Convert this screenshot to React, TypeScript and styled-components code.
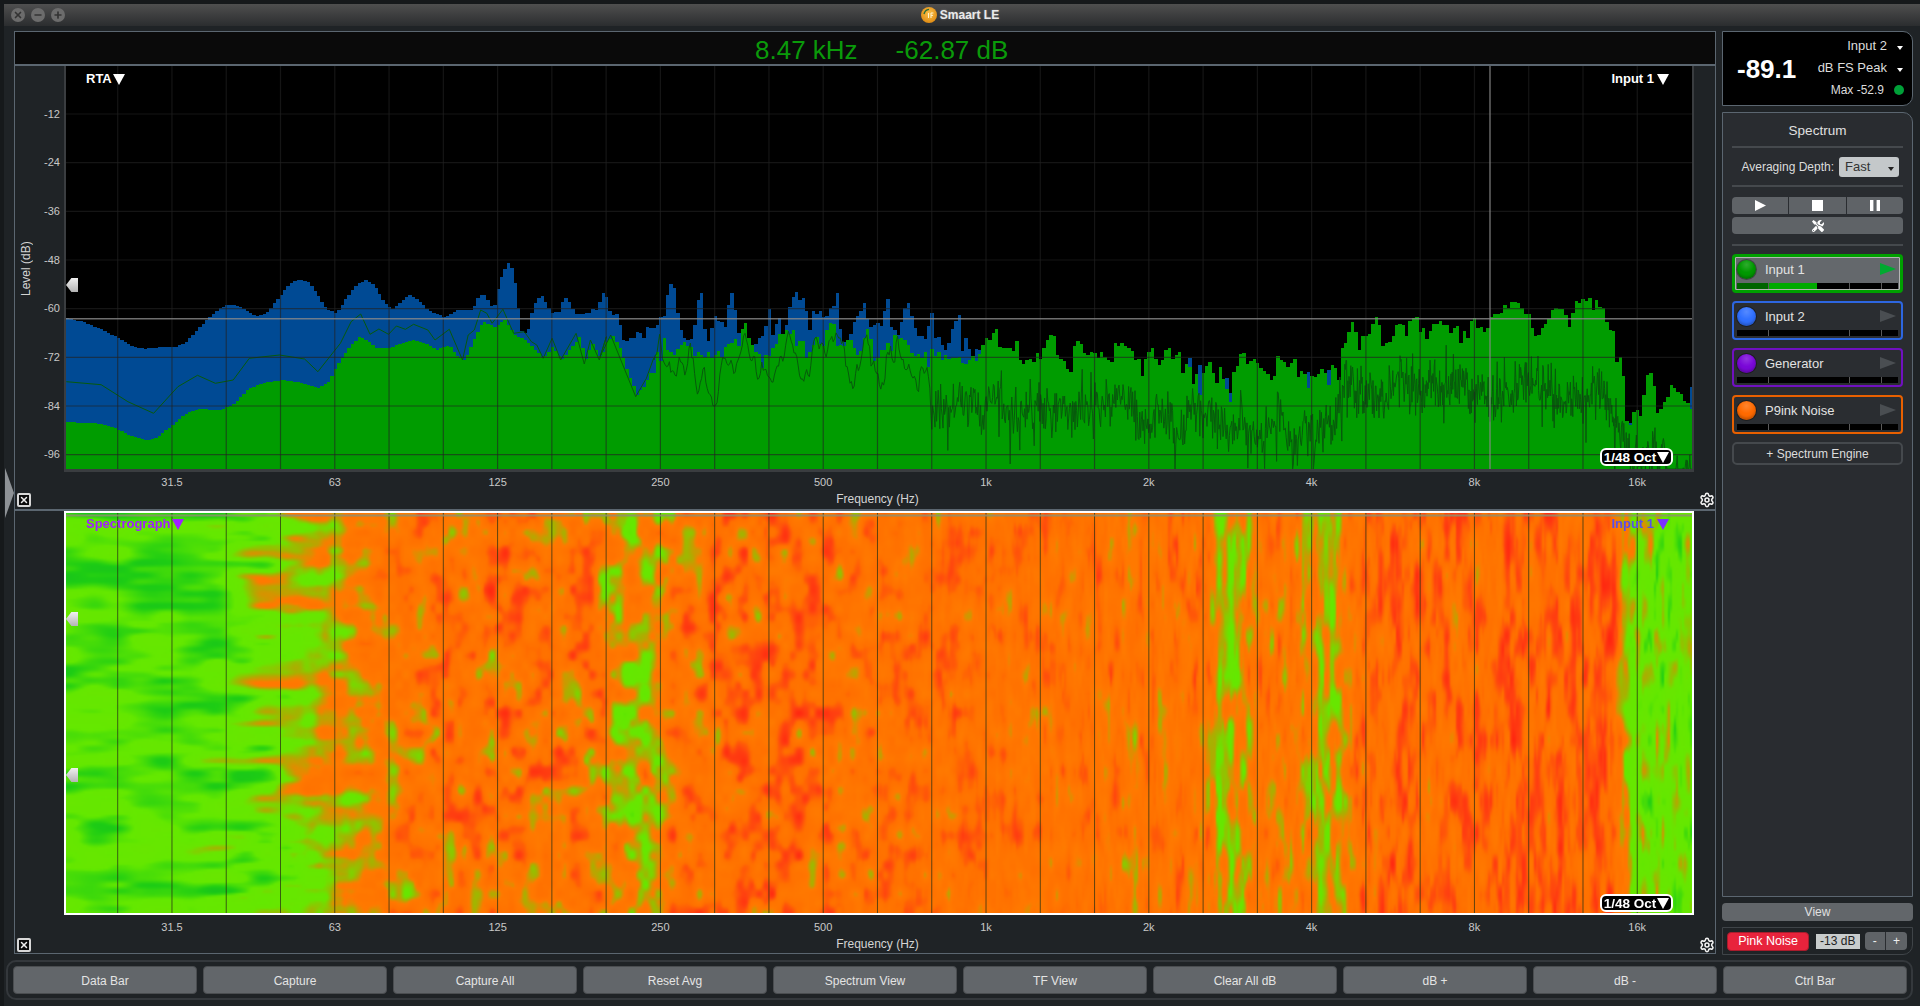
import React, { useLayoutEffect, useRef } from "react";
import styled, { createGlobalStyle } from "styled-components";
import { X, Minus, Plus, Settings } from "lucide-react";
import { FaTools } from "react-icons/fa";

const Global = createGlobalStyle`
  html, body { margin: 0; padding: 0; background: #16191b; overflow: hidden; }
  * { box-sizing: border-box; }
  body { font-family: "Liberation Sans", Arial, sans-serif; color: #d8d8d8; }
`;

/* ---------- data helpers ---------- */
type P = [number, number];
const rng = (seed: number) => () => {
  seed = (seed + 0x6d2b79f5) | 0;
  let t = Math.imul(seed ^ (seed >>> 15), 1 | seed);
  t = (t + Math.imul(t ^ (t >>> 7), 61 | t)) ^ t;
  return ((t ^ (t >>> 14)) >>> 0) / 4294967296;
};
const lerpAt = (pts: P[], x: number) => {
  if (x <= pts[0][0]) return pts[0][1];
  for (let i = 1; i < pts.length; i++) {
    if (x <= pts[i][0]) {
      const [a, b] = pts[i - 1];
      const [c, d] = pts[i];
      return b + ((d - b) * (x - a)) / (c - a || 1);
    }
  }
  return pts[pts.length - 1][1];
};
const from = (x0: number, arr: number[][]): P[] => arr.map(([X, Y]) => [x0 + X / 2.8, 250 + Y / 3]);

const hash = (x: number, y: number) => {
  let h = (Math.imul(x, 374761393) + Math.imul(y, 668265263)) | 0;
  h = Math.imul(h ^ (h >>> 13), 1274126177);
  return ((h ^ (h >>> 16)) >>> 0) / 4294967296;
};
const sm = (t: number) => t * t * (3 - 2 * t);
const vn = (x: number, y: number) => {
  const xi = Math.floor(x), yi = Math.floor(y);
  const u = sm(x - xi), v = sm(y - yi);
  const a = hash(xi, yi), b = hash(xi + 1, yi), c = hash(xi, yi + 1), d = hash(xi + 1, yi + 1);
  return (a + (b - a) * u + (c - a) * v + (a - b - c + d) * u * v) * 2 - 1;
};

const blue: P[] = [
  ...from(60, [[18,205],[60,215],[110,237],[160,265],[200,290],[230,296],[270,292],[320,291],[350,275],[380,240],[410,205],[440,177],[470,163],[500,170],[545,198],[575,188],[610,140],[640,100],[665,88],[690,95],[715,130],[740,175],[770,190],[800,140],[825,105],[850,90],[875,105],[900,150],[925,180],[950,155],[975,135],[1000,150],[1025,180],[1075,202],[1110,180],[1150,180],[1165,145],[1180,130],[1195,150],[1200,168],[1215,165],[1220,125],[1235,70],[1250,37],[1262,55],[1270,100],[1280,180],[1283,240],[1305,250],[1315,195],[1325,155],[1340,138],[1355,155],[1375,190],[1395,180],[1410,138],[1425,155],[1435,200],[1470,190],[1500,178],[1515,130],[1530,135]]),
  ...from(600, [[0,130],[15,135],[25,185],[45,195],[55,235],[65,295],[80,260],[100,248],[120,265],[125,238],[150,232],[160,220],[180,178],[190,97],[205,115],[215,210],[230,265],[250,270],[260,230],[270,155],[280,135],[285,220],[300,275],[315,195],[330,215],[345,230],[355,170],[365,135],[375,180],[385,250],[400,260],[430,295],[455,240],[470,185],[475,270],[490,225],[500,205],[510,270],[530,150],[545,135],[565,150],[575,180],[580,280],[590,190],[615,180],[625,215],[645,175],[660,135],[665,230],[685,290],[720,185],[735,160],[745,210],[755,240],[770,215],[785,230],[800,135],[810,225],[830,255],[855,145],[870,195],[885,255],[910,265],[925,185],[930,270],[945,270],[965,300],[985,225],[1000,180],[1010,310],[1020,268],[1030,300],[1040,320],[1050,295],[1120,280],[1190,165],[1200,340],[1290,320],[1568,360]]),
];
const green: P[] = [
  ...from(60, [[18,517],[90,518],[140,530],[190,555],[240,573],[270,560],[310,525],[350,490],[390,476],[440,482],[480,465],[520,420],[560,400],[620,390],[680,400],[720,415],[750,395],[775,340],[800,300],[835,258],[860,275],[880,295],[920,295],[945,282],[990,270],[1020,280],[1050,300],[1085,285],[1110,320],[1130,332],[1150,280],[1180,215],[1215,232],[1240,208],[1270,255],[1300,270],[1350,325],[1375,290],[1400,330],[1450,262],[1470,330],[1485,275],[1510,325],[1530,265]]),
  ...from(600, [[0,320],[30,252],[55,300],[75,370],[100,435],[130,385],[150,320],[175,265],[190,320],[245,275],[260,320],[340,310],[370,265],[385,285],[400,210],[425,295],[450,320],[480,300],[500,260],[520,240],[535,240],[545,285],[565,280],[570,330],[600,262],[620,290],[630,235],[650,220],[660,290],[695,265],[715,330],[750,235],[760,330],[790,290],[825,260],[850,260],[860,300],[900,320],[920,295],[950,320],[975,320],[1000,330],[1030,340],[1085,265],[1105,228],[1115,300],[1145,305],[1155,250],[1170,320],[1200,340],[1240,285],[1265,243],[1275,310],[1305,345],[1330,280],[1345,275],[1360,320],[1400,315],[1420,335],[1440,285],[1480,285],[1490,320],[1510,340]]),
  ...from(1140, [[0,395],[12,318],[30,305],[45,355],[75,278],[85,320],[100,305],[130,340],[160,375],[190,335],[200,370],[218,345],[240,420],[260,350],[288,298],[300,320],[325,340],[350,385],[390,295],[410,340],[430,325],[445,370],[470,380],[525,360],[535,345],[555,365],[560,300],[590,225],[610,270],[630,260],[660,200],[690,290],[715,215],[745,220],[780,190],[800,270],[820,225],[870,215],[890,245],[930,205],[960,250],[990,185],[1020,175],[1055,155],[1085,205],[1095,250],[1120,240],[1145,190],[1180,165],[1195,240],[1210,165],[1240,150],[1265,148],[1295,180],[1305,225],[1325,255],[1330,340],[1345,330],[1360,515],[1385,465],[1395,525],[1410,405],[1420,365],[1440,420],[1445,500],[1480,415],[1510,430],[1520,465],[1545,475],[1568,475]]),
];
const darkHead: P[] = [
  ...from(60, [[18,395],[115,404],[190,455],[262,490],[330,410],[385,376],[435,400],[485,390],[530,325],[615,315],[685,327],[722,365],[785,280],[815,215],[842,192],[868,253],[893,237],[920,253],[942,228],[967,238],[990,223],[1030,240],[1050,270],[1090,238],[1127,330],[1143,255],[1160,240],[1178,180],[1195,190],[1210,220],[1240,178],[1270,250],[1300,245],[1320,275],[1335,285],[1353,325],[1378,265],[1402,330],[1445,250],[1468,342],[1485,270],[1510,330],[1530,260]]),
  ...from(600, [[0,320],[30,255],[100,440],[130,385],[150,325]]),
];
const darkMid: P[] = from(600, [[150,325],[165,280],[205,370],[220,320],[238,380],[250,290],[272,430],[290,375],[310,420],[328,430],[345,320],[385,350],[405,250],[440,390],[460,340],[490,380],[525,260],[575,390],[600,310],[630,340],[650,250],[690,350],[720,380],[755,270],[770,410],[830,280],[860,400],[885,370],[915,350],[925,430]]);
const centre: P[] = [[930,396],[1000,406],[1100,407],[1160,416],[1230,422],[1336,424],[1345,392],[1500,388],[1600,394],[1625,445],[1700,470]];
const spikes: number[][] = [
  [1188,358,367],[1198,365,395],[1225,378,389],[1228,393,402],[1307,372,388],[1327,370,385],[1628,423,425],[1690,387,409],
];

const STEP = 3.39;
const buildSpectrum = () => {
  const r = rng(11);
  let b = "M66 469 ";
  let g = "M66 469 ";
  for (let x = 66; x < 1692; x += STEP) {
    let gy = lerpAt(green, x);
    let by = x < 985 ? lerpAt(blue, x) : 500;
    if (x > 640) {
      gy += (r() - 0.5) * 8;
      if (r() < 0.09) gy += 8 + r() * 10;
    }
    if (x > 520 && x < 985) by += (r() - 0.5) * 6;
    const sp = spikes.find((s) => Math.abs(s[0] - x) < 2);
    if (sp) { by = sp[1]; gy = sp[2]; }
    b += `L${x.toFixed(1)} ${by.toFixed(1)} L${(x + STEP).toFixed(1)} ${by.toFixed(1)} `;
    g += `L${x.toFixed(1)} ${gy.toFixed(1)} L${(x + STEP).toFixed(1)} ${gy.toFixed(1)} `;
  }
  b += "L1692 469 Z";
  g += "L1692 469 Z";
  let d = `M${darkHead[0][0]} ${darkHead[0][1]} `;
  darkHead.forEach((p) => { d += `L${p[0].toFixed(1)} ${p[1].toFixed(1)} `; });
  for (let x = 654; x < 931; x += 1.4) {
    const amp = 10 + ((x - 654) / 277) * 10;
    d += `L${x.toFixed(1)} ${(lerpAt(darkMid, x) + vn(x / 3.4, 3) * amp + vn(x / 1.3, 8) * 5).toFixed(1)} `;
  }
  for (let x = 931; x < 1692; ) {
    const c = lerpAt(centre, x);
    const n = (r() + r()) / 2 - 0.5;
    const drop = r() < 0.08 ? 12 + r() * 24 : 0;
    const lift = r() < 0.06 ? -(8 + r() * 16) : 0;
    d += `L${x.toFixed(1)} ${Math.min(469, c + n * 56 + vn(x / 10, 7) * 15 + vn(x / 45, 2) * 5 + drop + lift).toFixed(1)} `;
    x += x > 1340 ? 0.6 : 0.8;
  }
  return { b, g, d };
};
const spectrum = buildSpectrum();

const gridX = Array.from({ length: 29 }, (_, k) => 117.7 + 54.27 * k).filter((x) => x < 1692);
const gridY = [114, 162.6, 211.3, 260, 308.7, 357.3, 406, 454.6];
const freqs = ["31.5", "63", "125", "250", "500", "1k", "2k", "4k", "8k", "16k"];
const levels = ["-12", "-24", "-36", "-48", "-60", "-72", "-84", "-96"];

/* ---------- spectrograph ---------- */
const fbm = (x: number, y: number) => (vn(x, y) * 0.72 + vn(2.1 * x + 5.3, 2.1 * y + 9.1) * 0.34) * 1.35;
const clamp01 = (t: number) => Math.max(0, Math.min(1, t));
const profile: P[] = [[66,.39],[190,.4],[243,.47],[290,.55],[337,.63],[390,.71],[480,.78],[540,.77],[600,.72],[625,.62],[655,.63],[675,.75],[720,.79],[790,.8],[860,.76],[930,.78],[1000,.76],[1080,.77],[1150,.75],[1205,.74],[1218,.6],[1236,.6],[1255,.74],[1300,.72],[1316,.63],[1335,.63],[1352,.75],[1365,.81],[1500,.82],[1580,.84],[1612,.88],[1622,.62],[1640,.5],[1692,.47]];
const ramp: [number, number[]][] = [
  [.12,[12,178,44]],[.3,[30,205,20]],[.42,[100,232,0]],[.52,[104,230,0]],[.6,[170,175,0]],[.67,[255,122,0]],[.81,[255,112,0]],[.93,[255,66,16]],[1.05,[255,34,16]],
];
const colorOf = (v: number) => {
  if (v <= ramp[0][0]) return ramp[0][1];
  for (let i = 1; i < ramp.length; i++) {
    if (v <= ramp[i][0]) {
      const t = (v - ramp[i - 1][0]) / (ramp[i][0] - ramp[i - 1][0]);
      return ramp[i][1].map((c, k) => ramp[i - 1][1][k] + (c - ramp[i - 1][1][k]) * t);
    }
  }
  return ramp[ramp.length - 1][1];
};
const paint = (c: HTMLCanvasElement) => {
  const ctx = c.getContext("2d");
  if (!ctx) return;
  const W = c.width, H = c.height;
  const img = ctx.createImageData(W, H);
  const sx = 1626 / W, sy = 400 / H;
  for (let j = 0; j < H; j++) {
    for (let i = 0; i < W; i++) {
      const x = 66 + i * sx, y = j * sy;
      const low = clamp01((430 - x) / 170);
      const high = clamp01((x - 780) / 420);
      const mid = 1 - low - high;
      const lowAmp = 0.11 + 0.09 * clamp01((x - 190) / 60);
      let n = 0;
      if (low > 0) n += low * fbm(x / 52, y / 13) * lowAmp;
      if (mid > 0) n += mid * fbm(x / 14 + 40, y / 20) * 0.185;
      if (high > 0) n += high * (fbm(x / 6 + 80, y / 32) * 0.15 + vn(x / 9, 3.3) * 0.03);
      const [r, g, b] = colorOf(lerpAt(profile, x) + n);
      const k = (j * W + i) * 4;
      img.data[k] = r; img.data[k + 1] = g; img.data[k + 2] = b; img.data[k + 3] = 255;
    }
  }
  ctx.putImageData(img, 0, 0);
};

/* ---------- window chrome ---------- */
const Win = styled.div`
  width: 1920px; height: 1006px; padding: 4px 0 0 4px; display: flex; flex-direction: column; overflow: hidden;
`;
const Inner = styled.div`
  flex: 1; display: flex; flex-direction: column; background: #1f2326; min-height: 0;
`;
const TitleBar = styled.div`
  height: 22px; flex: none; position: relative; display: flex; align-items: center; justify-content: center;
  padding-right: 4px; gap: 3px;
  background: linear-gradient(#4f4f4f, #2b2d2f);
  font-size: 12px; font-weight: 700; color: #eaeaea;
  text-shadow: 0 0 2px rgba(255,255,255,.35);
`;
const Lights = styled.div`
  position: absolute; left: 7px; top: 4px; display: flex; gap: 6px;
`;
const Light = styled.span`
  width: 14px; height: 14px; border-radius: 50%; background: #6c6c6c; color: #333;
  display: flex; align-items: center; justify-content: center;
`;
const Main = styled.div`
  flex: none; display: flex; gap: 6px; padding: 5px 0 0 10px; height: 928px;
`;
const LeftPane = styled.div`
  width: 1702px; display: flex; flex-direction: column;
`;
const RightPane = styled.div`
  width: 191px; display: flex; flex-direction: column;
`;
const Readout = styled.div`
  height: 35px; flex: none; background: #0a0a0a; border: 1px solid #5b6670; border-bottom-width: 2px;
  display: flex; align-items: center; padding: 4px 0 0 740px; gap: 38px;
  font-size: 26px; color: #0a9a0a; line-height: 1;
`;
const PlotSection = styled.section<{ $last?: boolean }>`
  position: relative; height: 443px; flex: none;
  display: grid; grid-template-columns: 49px 1630px 1fr;
  border-left: 1px solid #5b6670; border-right: 1px solid #5b6670;
  border-bottom: ${(p) => (p.$last ? "1px solid #5b6670" : "none")};
`;
const Divider = styled.div`
  height: 2px; flex: none; background: #5b6670;
`;
const YAxis = styled.div`
  display: flex; justify-content: space-between; padding: 0 4px 0 5px;
`;
const LevelTitle = styled.div`
  writing-mode: vertical-rl; transform: rotate(180deg); font-size: 12px; color: #d4d4d4;
  margin-top: 173px; height: 60px; line-height: 12px; text-align: center;
`;
const YTicks = styled.div`
  display: flex; flex-direction: column; padding-top: 23.2px;
`;
const YTick = styled.div`
  height: 48.7px; flex: none; display: flex; align-items: center; justify-content: flex-end;
  font-size: 11px; color: #c8c8c8;
`;
const PlotCol = styled.div`
  display: flex; flex-direction: column;
`;
const ChartBox = styled.div<{ $height: number; $frame: string; $top: number }>`
  position: relative; height: ${(p) => p.$height}px; flex: none; background: #000;
  border-left: 2px solid ${(p) => p.$frame}; border-right: 2px solid ${(p) => p.$frame};
  border-bottom: ${(p) => (p.$top ? 2 : 3)}px solid ${(p) => p.$frame};
  border-top: ${(p) => p.$top}px solid ${(p) => p.$frame};
`;
const ChartSvg = styled.svg`
  position: absolute; inset: 0; width: 100%; height: 100%; display: block;
`;
const Heat = styled.canvas`
  display: block; width: 100%; height: 100%; image-rendering: auto;
`;
const XTicks = styled.div<{ $gap: number }>`
  display: flex; padding-left: 26.6px; height: 18px; flex: none; margin-top: ${(p) => p.$gap}px;
`;
const XTick = styled.div`
  width: 162.8px; flex: none; text-align: center; font-size: 11px; line-height: 18px; color: #c8c8c8;
`;
const XTitle = styled.div`
  height: 16px; padding-right: 3px; text-align: center; font-size: 12px; line-height: 16px; color: #d4d4d4;
`;
const PlotLabel = styled.div<{ $color: string; $right?: boolean; $top: number }>`
  position: absolute; top: ${(p) => p.$top}px;
  ${(p) => (p.$right ? "right: 23px; gap: 3px;" : "left: 20px; gap: 1px;")}
  display: flex; align-items: center;
  font-size: 13px; font-weight: 700; color: ${(p) => p.$color}; line-height: 16px;
`;
const Tri = styled.span<{ $color: string }>`
  display: inline-block; width: 0; height: 0;
  border-left: 6px solid transparent; border-right: 6px solid transparent;
  border-top: 11px solid ${(p) => p.$color};
`;
const OctBadge = styled.div<{ $bottom: number }>`
  position: absolute; right: 19px; bottom: ${(p) => p.$bottom}px; height: 18px; width: 73px;
  background: #000; border: 2px solid #fff; border-radius: 6px;
  display: flex; align-items: center; justify-content: center; gap: 1px;
  font-size: 13.5px; font-weight: 700; color: #fff; white-space: nowrap;
`;
const Handle = styled.div<{ $top: number }>`
  position: absolute; left: 0; top: ${(p) => p.$top}px; width: 12px; height: 14px;
  background: linear-gradient(#f0f0f0, #b4b4b4);
  clip-path: polygon(45% 0, 100% 0, 100% 100%, 45% 100%, 0 50%);
`;
const CloseBox = styled.button<{ $bottom: number }>`
  position: absolute; left: 2px; bottom: ${(p) => p.$bottom}px; width: 14px; height: 14px; padding: 0;
  background: #0c0c0c; border: 2px solid #d8d8d8; border-radius: 2px; color: #eee;
  display: flex; align-items: center; justify-content: center;
`;
const Gear = styled.div<{ $bottom: number }>`
  position: absolute; right: 0; bottom: ${(p) => p.$bottom}px; width: 16px; height: 16px; color: #f4f4f4;
  display: flex;
`;
const SideArrow = styled.svg`
  position: absolute; left: -10px; top: 402px;
`;

/* ---------- right pane ---------- */
const Meter = styled.div`
  height: 75px; flex: none; background: #000; border: 1px solid #5b6670;
  border-radius: 0 10px 10px 0; display: flex; align-items: center; padding: 0 9px 0 14px; justify-content: space-between;
`;
const BigValue = styled.div`
  font-size: 26px; font-weight: 700; color: #fff; margin-top: 2px;
`;
const MeterLines = styled.div`
  display: flex; flex-direction: column; align-items: flex-end; gap: 4px; margin-top: -2px;
`;
const MeterLine = styled.div<{ $small?: boolean }>`
  height: 18px; display: flex; align-items: center; gap: 10px; font-size: ${(p) => (p.$small ? 12 : 13)}px; color: #dcdcdc;
`;
const Caret = styled.span<{ $color?: string }>`
  display: inline-block; width: 0; height: 0; margin-top: 4px;
  border-left: 3.5px solid transparent; border-right: 3.5px solid transparent;
  border-top: 4px solid ${(p) => p.$color || "#fff"};
`;
const LevelDot = styled.span`
  width: 10px; height: 10px; border-radius: 50%; background: #00a038; margin-right: -1px;
`;
const SpectrumPanel = styled.div`
  height: 785px; flex: none; margin-top: 6px; background: #292c30; border: 1px solid #5b6670;
  border-top-right-radius: 10px; padding: 0 9px; display: flex; flex-direction: column;
`;
const PanelTitle = styled.div`
  height: 33px; flex: none; display: flex; align-items: center; justify-content: center; padding-top: 2px; font-size: 13.5px; color: #e0e0e0;
`;
const Sep = styled.div`
  height: 2px; flex: none; background: #45494d;
`;
const AvgRow = styled.div`
  height: 37px; flex: none; display: flex; align-items: center; justify-content: flex-end; gap: 5px; padding-right: 4px;
  font-size: 12px; color: #dcdcdc;
`;
const Dropdown = styled.div`
  width: 60px; height: 20px; background: #c4c8ca; border-radius: 3px; color: #333; font-size: 13px;
  display: flex; align-items: center; justify-content: space-between; padding: 0 5px 0 6px;
`;
const Transport = styled.div`
  display: grid; grid-template-columns: repeat(3, 1fr); gap: 1px; height: 17px; flex: none; margin-top: 10px;
  background: #2a2d31; border-radius: 4px; overflow: hidden;
`;
const TransportBtn = styled.div`
  background: #5f6367; display: flex; align-items: center; justify-content: center; color: #fff;
`;
const ToolsBar = styled.div`
  height: 17px; flex: none; margin: 3px 0 10px; background: #5f6367; border-radius: 4px; color: #fff;
  display: flex; align-items: center; justify-content: center;
`;
const Channels = styled.div`
  display: flex; flex-direction: column; gap: 8px; margin-top: 8px;
`;
const Channel = styled.div<{ $color: string; $selected?: boolean }>`
  height: 39px; border-radius: 4px; display: flex; flex-direction: column; justify-content: space-between;
  border: ${(p) => (p.$selected ? 3 : 2)}px solid ${(p) => p.$color};
  padding: ${(p) => (p.$selected ? "2px 2px 1px" : "3px 3px 2px")};
  background: ${(p) => (p.$selected ? "#64686c" : "#2a2d31")};
  box-shadow: ${(p) => (p.$selected ? "inset 0 0 0 1px #b4b4b4" : "none")};
`;
const ChannelTop = styled.div`
  display: flex; align-items: center; height: 20px; font-size: 13px; color: #e2e2e2;
`;
const ChannelDot = styled.span<{ $color: string }>`
  width: 19px; height: 19px; border-radius: 50%; flex: none; margin-right: 9px;
  background: radial-gradient(circle at 50% 25%, rgba(255,255,255,.18), transparent 45%), ${(p) => p.$color};
  box-shadow: inset 0 -2px 3px rgba(0,0,0,.25), 0 0 0 1px rgba(0,0,0,.35);
`;
const ChannelName = styled.span`
  flex: 1;
`;
const PlayTri = styled.span<{ $color: string }>`
  width: 0; height: 0; margin-right: 2px;
  border-top: 6px solid transparent; border-bottom: 6px solid transparent;
  border-left: 16px solid ${(p) => p.$color};
`;
const MeterBar = styled.div`
  height: 6px; flex: none; background: #000; display: grid; grid-template-columns: 32px 81px 32px 1fr;
`;
const MeterSeg = styled.div<{ $fill?: string; $pct?: number }>`
  border-right: 1px solid #5a5a5a;
  &:last-child { border-right: none; }
  background: ${(p) => (p.$fill ? `linear-gradient(to right, ${p.$fill} ${p.$pct}%, transparent ${p.$pct}%)` : "none")};
`;
const AddEngine = styled.div`
  height: 23px; flex: none; margin-top: 8px; background: #2a2d31; border: 2px solid #45494d; border-radius: 5px;
  display: flex; align-items: center; justify-content: center; font-size: 12px; color: #dcdcdc;
`;
const ViewBtn = styled.div`
  height: 18px; flex: none; margin-top: 6px; background: #62666a; border-radius: 4px;
  display: flex; align-items: center; justify-content: center; font-size: 12px; color: #e0e0e0;
`;
const NoisePanel = styled.div`
  height: 28px; flex: none; margin-top: 6px; border: 1px solid #3f4448; border-radius: 0 0 10px 0;
  display: flex; align-items: center; padding: 0 5px 0 4px;
`;
const PinkBtn = styled.div`
  width: 83px; height: 19px; background: #e8233c; border: 1px solid #a81c2c; border-radius: 4px;
  display: flex; align-items: center; justify-content: center; font-size: 12.5px; color: #fff;
`;
const DbBox = styled.div`
  width: 44px; height: 15px; margin-left: 7px; background: #c8cccc; color: #222; font-size: 12px;
  display: flex; align-items: center; justify-content: center;
`;
const StepGroup = styled.div`
  width: 43px; height: 18px; margin-left: 5px; display: grid; grid-template-columns: 1fr 1fr; gap: 1px;
  background: #2a2d31; border-radius: 4px; overflow: hidden;
`;
const StepBtn = styled.div`
  background: #5f6367; color: #eee; font-size: 12px; display: flex; align-items: center; justify-content: center;
`;

/* ---------- bottom bar ---------- */
const BottomBar = styled.div`
  height: 40px; width: 1907px; flex: none; margin: 6px 0 0 2px; border: 2px solid #34383c; border-radius: 10px;
  padding: 4px 5px; display: grid; grid-template-columns: repeat(10, 184px); gap: 6px;
`;
const BarBtn = styled.button`
  background: #62666a; border: 1px solid #4a4d50; border-radius: 4px; color: #e4e4e4; padding: 1px 0 0;
  font-family: inherit; font-size: 12px;
`;

/* ---------- parts ---------- */
const Logo = () => (
  <svg width="16" height="16" viewBox="0 0 16 16">
    <defs>
      <radialGradient id="lg" cx="50%" cy="40%" r="60%">
        <stop offset="0" stopColor="#f9c04a" />
        <stop offset="1" stopColor="#e08c14" />
      </radialGradient>
    </defs>
    <circle cx="8" cy="8" r="8" fill="url(#lg)" />
    <path d="M3 7 A6 6 0 0 1 8 2.4" fill="none" stroke="#2f6d3a" strokeWidth="1.4" />
    <path d="M7.5 6v5M10 6v5M10 6h2.4M10 8.4h2" stroke="#fff3d0" strokeWidth="1" fill="none" />
  </svg>
);

const SpectrumChart = () => (
  <ChartSvg viewBox="66 66 1626 403" preserveAspectRatio="none">
    <path d={spectrum.b} fill="#004a94" shapeRendering="crispEdges" />
    <path d={spectrum.g} fill="#009c00" shapeRendering="crispEdges" />
    <path d={spectrum.d} fill="none" stroke="#075a0c" strokeWidth="1" />
    {gridX.map((x) => (
      <line key={x} x1={x} x2={x} y1="66" y2="469" stroke="rgb(34,34,34)" strokeOpacity=".62" strokeWidth="1.2" />
    ))}
    {gridY.map((y) => (
      <line key={y} x1="66" x2="1692" y1={y} y2={y} stroke="rgb(34,34,34)" strokeOpacity=".62" strokeWidth="1.2" />
    ))}
    <line x1="1490" x2="1490" y1="66" y2="469" stroke="#8a8a8a" strokeOpacity=".8" strokeWidth="1.4" />
    <line x1="66" x2="1692" y1="318.7" y2="318.7" stroke="#8a8a8a" strokeOpacity=".8" strokeWidth="1.6" />
  </ChartSvg>
);

const Spectrograph = () => {
  const ref = useRef<HTMLCanvasElement>(null);
  useLayoutEffect(() => {
    if (ref.current) paint(ref.current);
  }, []);
  return (
    <>
      <Heat ref={ref} width={813} height={200} />
      <ChartSvg viewBox="66 513 1626 400" preserveAspectRatio="none">
        {gridX.map((x) => (
          <line key={x} x1={x} x2={x} y1="513" y2="913" stroke="rgb(40,50,20)" strokeOpacity=".75" strokeWidth="1" />
        ))}
        <line x1="66" x2="1692" y1="515.5" y2="515.5" stroke="#8f8f70" strokeOpacity=".85" strokeWidth="2" />
      </ChartSvg>
    </>
  );
};

const Axis = ({ gap }: { gap: number }) => (
  <>
    <XTicks $gap={gap}>
      {freqs.map((f) => <XTick key={f}>{f}</XTick>)}
    </XTicks>
    <XTitle>Frequency (Hz)</XTitle>
  </>
);

const channelData = [
  { name: "Input 1", border: "#00a000", dot: "#009900", selected: true, play: "#00aa30" },
  { name: "Input 2", border: "#2d66e0", dot: "#3070ff", play: "#4a4e52" },
  { name: "Generator", border: "#7010c0", dot: "#7a08d8", play: "#4a4e52" },
  { name: "P9ink Noise", border: "#e86000", dot: "#ff6a00", play: "#4a4e52" },
];
const buttons = ["Data Bar", "Capture", "Capture All", "Reset Avg", "Spectrum View", "TF View", "Clear All dB", "dB +", "dB -", "Ctrl Bar"];

export default function App() {
  return (
    <Win>
      <Global />
      <Inner>
        <TitleBar>
          <Lights>
            <Light><X size={10} strokeWidth={4} /></Light>
            <Light><Minus size={10} strokeWidth={4} /></Light>
            <Light><Plus size={10} strokeWidth={4} /></Light>
          </Lights>
          <Logo />
          <span>Smaart LE</span>
        </TitleBar>
        <Main>
          <LeftPane>
            <Readout>
              <span>8.47 kHz</span>
              <span>-62.87 dB</span>
            </Readout>
            <PlotSection>
              <YAxis>
                <LevelTitle>Level (dB)</LevelTitle>
                <YTicks>
                  {levels.map((l) => <YTick key={l}>{l}</YTick>)}
                </YTicks>
              </YAxis>
              <PlotCol>
                <ChartBox $height={406} $frame="#3a3d40" $top={0}>
                  <SpectrumChart />
                  <Handle $top={212} />
                  <PlotLabel $color="#fff" $top={5}>RTA<Tri $color="#fff" /></PlotLabel>
                  <PlotLabel $color="#fff" $top={5} $right>Input 1<Tri $color="#fff" /></PlotLabel>
                  <OctBadge $bottom={3}>1/48 Oct<Tri $color="#fff" /></OctBadge>
                </ChartBox>
                <Axis gap={1} />
              </PlotCol>
              <CloseBox $bottom={2}><X size={10} strokeWidth={3.5} /></CloseBox>
              <Gear $bottom={1}><Settings size={16} strokeWidth={2.3} /></Gear>
              <SideArrow width="9" height="50" viewBox="0 0 9 50">
                <path d="M0 0 L9 25 L0 50 Z" fill="#8e9296" />
              </SideArrow>
            </PlotSection>
            <Divider />
            <PlotSection $last>
              <YAxis />
              <PlotCol>
                <ChartBox $height={404} $frame="#fff" $top={2}>
                  <Spectrograph />
                  <Handle $top={99} />
                  <Handle $top={255} />
                  <PlotLabel $color="#a020ff" $top={3}>Spectrograph<Tri $color="#a020ff" /></PlotLabel>
                  <PlotLabel $color="#5a50e8" $top={3} $right>Input 1<Tri $color="#7a30ff" /></PlotLabel>
                  <OctBadge $bottom={1}>1/48 Oct<Tri $color="#fff" /></OctBadge>
                </ChartBox>
                <Axis gap={3} />
              </PlotCol>
              <CloseBox $bottom={1}><X size={10} strokeWidth={3.5} /></CloseBox>
              <Gear $bottom={0}><Settings size={16} strokeWidth={2.3} /></Gear>
            </PlotSection>
          </LeftPane>
          <RightPane>
            <Meter>
              <BigValue>-89.1</BigValue>
              <MeterLines>
                <MeterLine>Input 2<Caret /></MeterLine>
                <MeterLine>dB FS Peak<Caret /></MeterLine>
                <MeterLine $small>Max -52.9<LevelDot /></MeterLine>
              </MeterLines>
            </Meter>
            <SpectrumPanel>
              <PanelTitle>Spectrum</PanelTitle>
              <Sep />
              <AvgRow>
                Averaging Depth:
                <Dropdown>Fast<Caret $color="#222" /></Dropdown>
              </AvgRow>
              <Sep />
              <Transport>
                <TransportBtn><svg width="12" height="11" viewBox="0 0 12 11"><path d="M1 0 L12 5.5 L1 11 Z" fill="#fff" /></svg></TransportBtn>
                <TransportBtn><svg width="11" height="11" viewBox="0 0 11 11"><rect width="11" height="11" fill="#fff" /></svg></TransportBtn>
                <TransportBtn><svg width="10" height="11" viewBox="0 0 10 11"><path d="M0 0h3.4v11H0zM6.6 0H10v11H6.6z" fill="#fff" /></svg></TransportBtn>
              </Transport>
              <ToolsBar><FaTools size={12} /></ToolsBar>
              <Sep />
              <Channels>
                {channelData.map((c) => (
                  <Channel key={c.name} $color={c.border} $selected={c.selected}>
                    <ChannelTop>
                      <ChannelDot $color={c.dot} />
                      <ChannelName>{c.name}</ChannelName>
                      <PlayTri $color={c.play} />
                    </ChannelTop>
                    <MeterBar>
                      <MeterSeg $fill={c.selected ? "#006400" : undefined} $pct={100} />
                      <MeterSeg $fill={c.selected ? "#00aa00" : undefined} $pct={60} />
                      <MeterSeg />
                      <MeterSeg />
                    </MeterBar>
                  </Channel>
                ))}
              </Channels>
              <AddEngine>+ Spectrum Engine</AddEngine>
            </SpectrumPanel>
            <ViewBtn>View</ViewBtn>
            <NoisePanel>
              <PinkBtn>Pink Noise</PinkBtn>
              <DbBox>-13 dB</DbBox>
              <StepGroup>
                <StepBtn>-</StepBtn>
                <StepBtn>+</StepBtn>
              </StepGroup>
            </NoisePanel>
          </RightPane>
        </Main>
        <BottomBar>
          {buttons.map((b) => <BarBtn key={b}>{b}</BarBtn>)}
        </BottomBar>
      </Inner>
    </Win>
  );
}
